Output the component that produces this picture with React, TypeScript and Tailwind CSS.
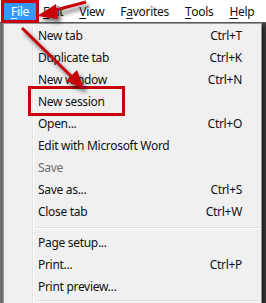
import React from "react";

const font = { fontFamily: '"Noto Sans", "Open Sans", sans-serif' };

const bar = [
  { key: "F", rest: "ile", active: true },
  { key: "E", rest: "dit" },
  { key: "V", rest: "iew" },
  { pre: "F", key: "a", rest: "vorites" },
  { key: "T", rest: "ools" },
  { key: "H", rest: "elp" },
];

const groupA = [
  ["New tab", "Ctrl+T"],
  ["Duplicate tab", "Ctrl+K"],
  ["New window", "Ctrl+N"],
  ["New session", ""],
  ["Open...", "Ctrl+O"],
  ["Edit with Microsoft Word", ""],
  ["Save", "", true],
  ["Save as...", "Ctrl+S"],
  ["Close tab", "Ctrl+W"],
];

const groupB = [
  ["Page setup...", ""],
  ["Print...", "Ctrl+P"],
  ["Print preview...", ""],
];

function Row({ label, shortcut, disabled }: { label: string; shortcut: string; disabled?: boolean }) {
  return (
    <div className="flex h-[22px] items-center">
      <div className="w-[28px] shrink-0" />
      <div className="flex h-full w-[2px] shrink-0">
        <div className="w-px bg-[#e2e3e3]" />
        <div className="w-px bg-white" />
      </div>
      <div className={"flex flex-1 items-center justify-between pl-[4px] pr-[19px] " + (disabled ? "text-[#6d6d6d]" : "text-[#111]")}>
        <span>{label}</span>
        <span>{shortcut}</span>
      </div>
    </div>
  );
}

function Separator({ h }: { h: string }) {
  return (
    <div className={"flex " + h}>
      <div className="w-[28px] shrink-0" />
      <div className="flex w-[2px] shrink-0">
        <div className="w-px bg-[#e2e3e3]" />
        <div className="w-px bg-white" />
      </div>
      <div className="flex flex-1 flex-col justify-center pl-[2px] pr-[2px]">
        <div className="h-px bg-[#e0e0e0]" />
        <div className="h-px bg-white" />
      </div>
    </div>
  );
}

export default function App() {
  return (
    <div className="relative h-[303px] w-[266px] overflow-hidden bg-[#424242] text-[12px] tracking-[-0.3px]" style={font}>
      <div className="flex h-[23px] items-start border-b border-[#5a5a5a] bg-white pl-[4px] pt-[3px] text-[#111]">
        {bar.map((b, i) => (
          <div
            key={i}
            className={"flex h-[17px] items-center px-[7px] " + (b.active ? "bg-[#3399ff] text-white" : "mr-[2px]")}
          >
            {b.pre}
            <span className="underline underline-offset-2">{b.key}</span>
            {b.rest}
          </div>
        ))}
      </div>

      <div className="flex">
        <div className="w-[3px] shrink-0 bg-[#6e6e6e]" />
        <div className="w-[259px] shrink-0 border border-[#979797] bg-[#f0f0f0] pt-px shadow-[3px_3px_3px_rgba(0,0,0,0.5)]">
          {groupA.map(([l, s, d]) => (
            <Row key={l as string} label={l as string} shortcut={s as string} disabled={!!d} />
          ))}
          <Separator h="h-[9px]" />
          {groupB.map(([l, s]) => (
            <Row key={l} label={l} shortcut={s} />
          ))}
          <Separator h="h-[5px]" />
        </div>
      </div>

      {/* annotation boxes */}
      <div className="absolute left-[1px] top-0 h-[23px] w-[38px] border-[3px] border-[#c8000a]" />
      <div className="absolute left-[28px] top-[86px] h-[30px] w-[97px] border-[3px] border-[#c8000a]" />

      <svg className="pointer-events-none absolute left-0 top-0" width="266" height="303" viewBox="0 0 266 303">
        <defs>
          <filter id="sh" x="-50%" y="-50%" width="200%" height="200%">
            <feGaussianBlur stdDeviation="2" />
          </filter>
        </defs>
        <g opacity="0.55" transform="translate(3,4)" filter="url(#sh)" fill="#000" stroke="#000">
          <line x1="86" y1="2" x2="52" y2="11" strokeWidth="3" />
          <polygon points="37,16 56,4 58,19" stroke="none" />
          <line x1="22" y1="28" x2="72" y2="77" strokeWidth="3" />
          <polygon points="84,89 66,81 77,70" stroke="none" />
        </g>
        <g fill="#c8000a" stroke="#c8000a">
          <line x1="86" y1="2" x2="52" y2="11" strokeWidth="3" />
          <polygon points="37,16 56,4 58,19" stroke="none" />
          <line x1="22" y1="28" x2="72" y2="77" strokeWidth="3" />
          <polygon points="84,89 66,81 77,70" stroke="none" />
        </g>
      </svg>
    </div>
  );
}
